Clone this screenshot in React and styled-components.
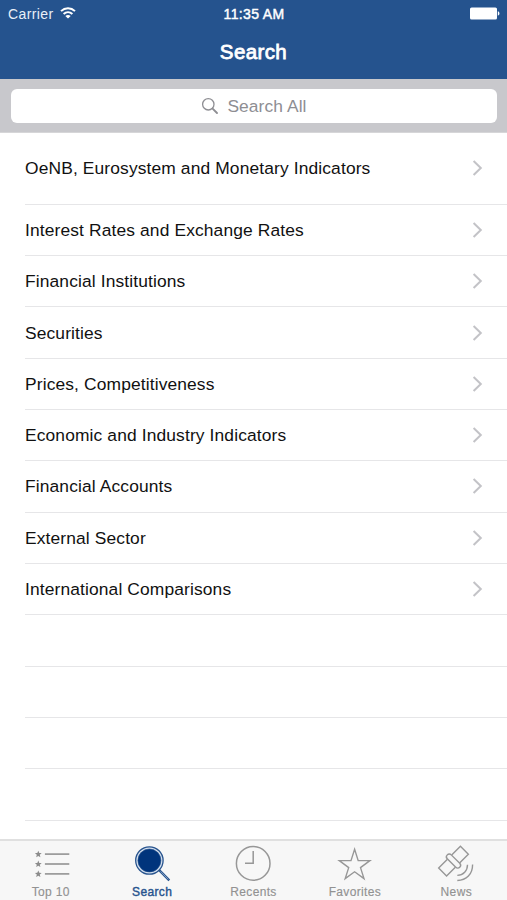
import styled, { createGlobalStyle } from "styled-components"

const categories = [
    "OeNB, Eurosystem and Monetary Indicators",
    "Interest Rates and Exchange Rates",
    "Financial Institutions",
    "Securities",
    "Prices, Competitiveness",
    "Economic and Industry Indicators",
    "Financial Accounts",
    "External Sector",
    "International Comparisons",
]

const emptyRows = [1, 2, 3, 4]

const tabs = [
    { name: "Top 10", Icon: TopIcon },
    { name: "Search", Icon: SearchIcon, active: true },
    { name: "Recents", Icon: ClockIcon },
    { name: "Favorites", Icon: StarIcon },
    { name: "News", Icon: SatelliteIcon },
]

export default function App(){
    return(
        <Screen>
            <GlobalStyle />
            <Header>
                <StatusBar>
                    <Carrier>
                        <span>Carrier</span>
                        <WifiIcon />
                    </Carrier>
                    <Clock>11:35 AM</Clock>
                    <BatteryIcon />
                </StatusBar>
                <Title>Search</Title>
            </Header>

            <SearchBar>
                <SearchField>
                    <svg width="18" height="18" viewBox="0 0 18 18" fill="none" stroke="#8e8e93">
                        <circle cx="7.3" cy="7.3" r="5.7" strokeWidth="1.3" />
                        <path d="M11.6 11.6L16 16" strokeWidth="1.9" strokeLinecap="round" />
                    </svg>
                    <span>Search All</span>
                </SearchField>
            </SearchBar>

            <List>
                {categories.map((name, i) => (
                    <Row key={name} $tall={i === 0}>
                        <span>{name}</span>
                        <svg width="12" height="18" viewBox="0 0 12 18" fill="none" stroke="#c3c3c7" strokeWidth="2">
                            <path d="M1.6 2L8.8 9L1.6 16" />
                        </svg>
                    </Row>
                ))}
                {emptyRows.map((n) => <Row key={n} />)}
            </List>

            <TabBar>
                {tabs.map(({ name, Icon, active }) => (
                    <Tab key={name} $active={active}>
                        <Icon />
                        <span>{name}</span>
                    </Tab>
                ))}
            </TabBar>
        </Screen>
    )
}

function WifiIcon(){
    return(
        <svg width="16" height="12" viewBox="0 0 16 12" fill="none" stroke="#fff" strokeWidth="2">
            <path d="M1 4.1C5 .3 11 .3 15 4.1" />
            <path d="M3.6 6.9C6.2 4.6 9.8 4.6 12.4 6.9" />
            <path d="M8 11.6L5.3 9C7 7.5 9 7.5 10.7 9Z" fill="#fff" stroke="none" />
        </svg>
    )
}

function BatteryIcon(){
    return(
        <svg width="31" height="13" viewBox="0 0 31 13" fill="#fff">
            <rect x="1" y="0.5" width="27" height="12" rx="1.6" />
            <path d="M28.8 4.3C31 5 31 8 28.8 8.7Z" />
        </svg>
    )
}

function TopIcon(){
    return(
        <svg width="40" height="40" viewBox="0 0 40 40">
            {[10.1, 20, 29.9].map((y) => (
                <g key={y} transform={`translate(7.3 ${y})`}>
                    <path d="M0-3.4L1-1.1L3.4-1L1.5.7L2.1 3.1L0 1.8L-2.1 3.1L-1.5.7L-3.4-1L-1-1.1Z" fill="#8c8c8c" />
                    <path d="M6.6 0H31" stroke="#929292" strokeWidth="1.6" />
                </g>
            ))}
        </svg>
    )
}

function SearchIcon(){
    return(
        <svg width="40" height="40" viewBox="0 0 40 40" fill="none" stroke="#28548e">
            <circle cx="17.4" cy="16.5" r="13.7" strokeWidth="1.3" fill="#d5e0ee" />
            <circle cx="17.4" cy="16.5" r="11.5" fill="#00347c" strokeWidth="0.6" />
            <path d="M27.2 26.2L37.3 36.4" strokeWidth="2.4" />
            <path d="M28.5 27.4L36.3 35.4" stroke="#a3b8d3" strokeWidth="0.7" />
        </svg>
    )
}

function ClockIcon(){
    return(
        <svg width="40" height="40" viewBox="0 0 40 40" fill="none" stroke="#979797" strokeWidth="1.5">
            <circle cx="20.2" cy="19.4" r="16.8" />
            <path d="M20.2 7V19.3H12" />
        </svg>
    )
}

function StarIcon(){
    return(
        <svg width="40" height="40" viewBox="0 0 40 40" fill="none" stroke="#979797" strokeWidth="1.4">
            <path d="M19.6 5.2L23.2 16.6H34.9L25.5 23.6L29 34.6L19.6 27.8L10.2 34.6L13.7 23.6L4.3 16.6H16Z" />
        </svg>
    )
}

function SatelliteIcon(){
    return(
        <svg width="40" height="40" viewBox="0 0 40 40" fill="none" stroke="#979797" strokeWidth="1.4">
            <g transform="translate(17.5 17.1) rotate(-45)">
                <path d="M-3-5.6H-15.4V5.6H-3" />
                <path d="M3-5.6H15.4V5.6H3" />
                <rect x="-2.8" y="-8.8" width="5.6" height="17.6" rx="2.8" />
            </g>
            <path d="M31.5 20.8C31.5 26.8 27.4 31.2 21.3 31.4" />
            <path d="M36.6 20.5C36.6 30.2 30.5 36.4 21.3 36.5" />
        </svg>
    )
}

const GlobalStyle = createGlobalStyle`
    * {
        box-sizing: border-box;
    }

    body {
        margin: 0;
        font-family: "Liberation Sans", Arial, sans-serif;
    }
`

const Screen = styled.div`
    width: 507px;
    height: 900px;
    display: flex;
    flex-direction: column;
    overflow: hidden;
    background: #ffffff;
`

const Header = styled.header`
    height: 79px;
    flex-shrink: 0;
    background: #25538e;
    color: #ffffff;
`

const StatusBar = styled.div`
    height: 27px;
    padding: 0 7px 0 8px;
    display: grid;
    grid-template-columns: 1fr auto 1fr;
    align-items: center;

    > svg {
        justify-self: end;
    }
`

const Carrier = styled.div`
    display: flex;
    align-items: center;
    gap: 6px;
    font-size: 14px;
    letter-spacing: 0.4px;
    color: #e9eff7;

    svg {
        margin-top: -2px;
    }
`

const Clock = styled.span`
    padding-top: 1px;
    font-size: 14px;
    letter-spacing: 0.35px;
    -webkit-text-stroke: 0.45px;
`

const Title = styled.h1`
    margin: 0;
    font-size: 20.5px;
    line-height: 50px;
    font-weight: 400;
    letter-spacing: 0.4px;
    text-align: center;
    -webkit-text-stroke: 0.8px;
`

const SearchBar = styled.div`
    height: 54px;
    flex-shrink: 0;
    padding: 10px 10px 10px 11px;
    background: #c8c8cc;
    border-bottom: 1px solid #d6d6d8;
`

const SearchField = styled.div`
    height: 34px;
    display: flex;
    align-items: center;
    justify-content: center;
    gap: 8px;
    border-radius: 6px;
    background: #ffffff;
    color: #8e8e93;
    font-size: 17.4px;
    letter-spacing: 0.08px;
`

const List = styled.main`
    flex: 1;
    min-height: 0;
    padding-left: 25px;
    overflow: hidden;
`

const Row = styled.div`
    height: ${(props) => (props.$tall ? "71.7px" : "51.33px")};
    padding-right: 23px;
    display: flex;
    align-items: center;
    justify-content: space-between;
    border-bottom: 1px solid #e6e6e8;
    color: #111111;
    font-size: 17.4px;
    letter-spacing: 0.13px;

    span {
        padding-top: 1px;
    }
`

const TabBar = styled.nav`
    height: 61px;
    flex-shrink: 0;
    display: grid;
    grid-template-columns: repeat(5, 1fr);
    background: #f7f7f7;
    border-top: 2px solid #e0e0e0;
`

const Tab = styled.div`
    padding-top: 3px;
    display: flex;
    flex-direction: column;
    align-items: center;
    font-size: 12px;
    line-height: 16px;
    letter-spacing: 0.35px;
    color: ${(props) => (props.$active ? "#28548e" : "#929292")};
    -webkit-text-stroke: ${(props) => (props.$active ? "0.4px" : "0.15px")};
`
